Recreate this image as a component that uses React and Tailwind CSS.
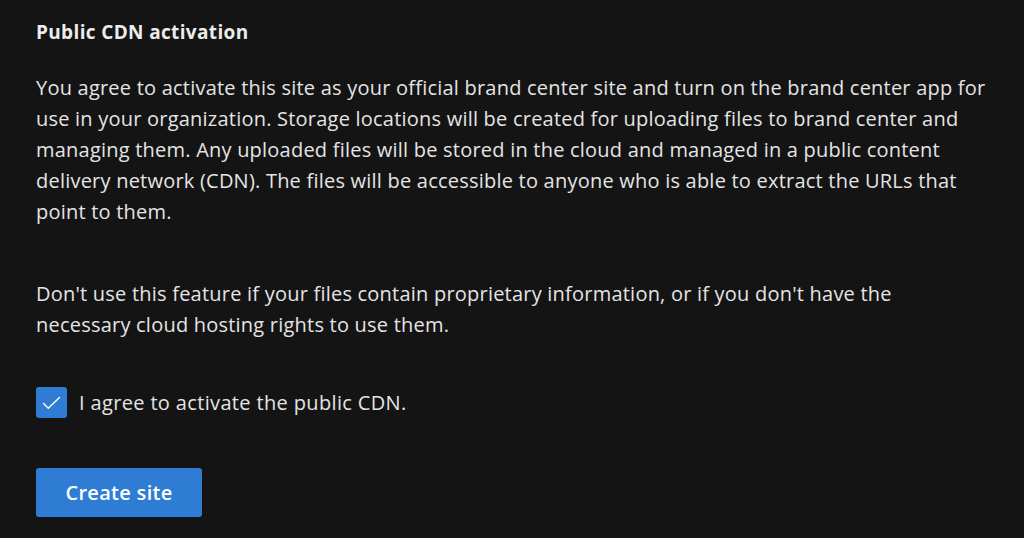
import React from 'react';

const lines1 = [
  'You agree to activate this site as your official brand center site and turn on the brand center app for',
  'use in your organization. Storage locations will be created for uploading files to brand center and',
  'managing them. Any uploaded files will be stored in the cloud and managed in a public content',
  'delivery network (CDN). The files will be accessible to anyone who is able to extract the URLs that',
  'point to them.',
];

const lines2 = [
  "Don't use this feature if your files contain proprietary information, or if you don't have the",
  'necessary cloud hosting rights to use them.',
];

export default function App() {
  return (
    <div className="w-[1024px] h-[538px] bg-[#141414] text-[#e4e4e4] px-9 pt-[19px] font-['Open_Sans',sans-serif] overflow-hidden">
      <h2 className="text-[19px] font-bold leading-[26px] tracking-[0.35px] text-[#ececec]">Public CDN activation</h2>

      <div className="text-[20px] leading-[31px] tracking-[0.22px] whitespace-nowrap">
        <p className="mt-[27px]">
          {lines1.map((l, i) => (
            <span key={i} className="block">{l}</span>
          ))}
        </p>

        <p className="mt-[51px]">
          {lines2.map((l, i) => (
            <span key={i} className="block">{l}</span>
          ))}
        </p>

        <label className="mt-[47px] flex items-center gap-[12px]">
          <span className="w-[31px] h-[31px] rounded-[3px] bg-[#2f7cd4] flex items-center justify-center">
            <svg width="19" height="14" viewBox="0 0 19 14" fill="none">
              <path d="M1.5 7.5l4.8 4.8L17.5 1.5" stroke="white" strokeWidth="1.4" strokeLinecap="round" strokeLinejoin="round" />
            </svg>
          </span>
          <span className="tracking-[0.35px]">I agree to activate the public CDN.</span>
        </label>
      </div>

      <button className="mt-[50px] w-[166px] h-[49px] rounded-[3px] bg-[#2f7cd4] text-white text-[20px] font-semibold tracking-[0.3px]">
        Create site
      </button>
    </div>
  );
}
